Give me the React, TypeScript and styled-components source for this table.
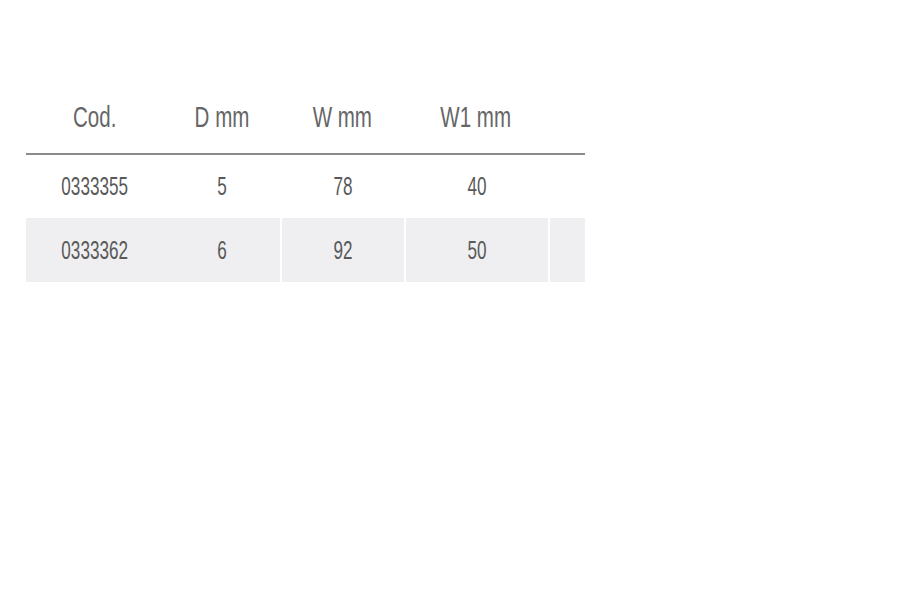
import React from "react";
import styled, { createGlobalStyle } from "styled-components";

const Global = createGlobalStyle`
  html, body { margin: 0; padding: 0; background: #ffffff; }
  body { font-family: "Liberation Sans", Arial, sans-serif; }
`;

const Page = styled.div`
  width: 898px;
  height: 606px;
  padding: 80px 0 0 26px;
  box-sizing: border-box;
`;

const Table = styled.div`
  display: grid;
  grid-template-columns: 138px 116px 124px 144px 37px;
  width: 559px;
`;

const HeadCell = styled.div`
  height: 73px;
  border-bottom: 2px solid #8b8b8b;
  display: flex;
  align-items: center;
  justify-content: center;
  color: #666666;
  font-size: 30px;
  line-height: 1;
  white-space: nowrap;
`;

const Cell = styled.div<{ $shade?: boolean; $sep?: boolean; $h: number }>`
  height: ${(p) => p.$h}px;
  box-sizing: border-box;
  background: ${(p) => (p.$shade ? "#efeff1" : "#ffffff")};
  border-left: ${(p) => (p.$sep ? "2px solid #ffffff" : "none")};
  display: flex;
  align-items: center;
  justify-content: center;
  color: #595959;
  font-size: 25px;
  line-height: 1;
  white-space: nowrap;
`;

const Narrow = styled.span`
  display: inline-block;
  transform: scaleX(0.685);
  transform-origin: center;
`;

const headers = ["Cod.", "D mm", "W mm", "W1 mm", ""];
const rows = [
  ["0333355", "5", "78", "40", ""],
  ["0333362", "6", "92", "50", ""],
];

export default function App() {
  return (
    <>
      <Global />
      <Page>
        <Table>
          {headers.map((h, i) => (
            <HeadCell key={"h" + i}>
              <Narrow>{h}</Narrow>
            </HeadCell>
          ))}
          {rows.map((r, ri) =>
            r.map((v, ci) => (
              <Cell
                key={ri + "-" + ci}
                $shade={ri % 2 === 1}
                $sep={ci >= 2}
                $h={ri === 0 ? 63 : 64}
              >
                <Narrow>{v}</Narrow>
              </Cell>
            ))
          )}
        </Table>
      </Page>
    </>
  );
}
